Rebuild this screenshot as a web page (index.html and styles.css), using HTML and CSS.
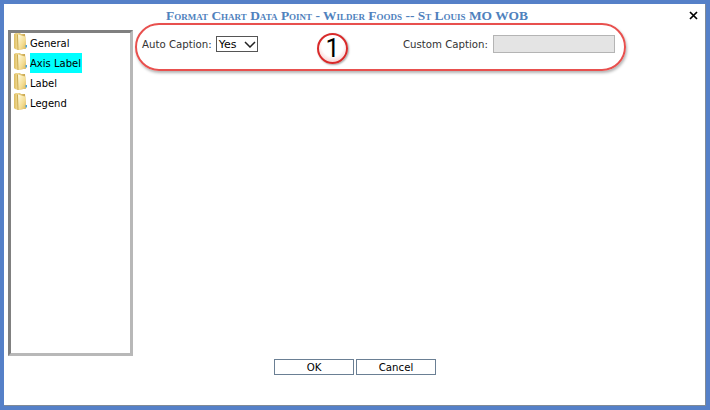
FILE: index.html
```html
<!DOCTYPE html>
<html>
<head>
  <title>Format Chart Data Point</title>
  <meta charset=utf-8>
  <link rel="stylesheet" href="styles.css">
</head>
<body>
<svg class="defs" width="0" height="0">
  <defs>
    <linearGradient id="folderBack" x1="0" y1="0" x2="1" y2="0">
      <stop offset="0" stop-color="#dcbc62"/>
      <stop offset="0.3" stop-color="#f3dc94"/>
      <stop offset="1" stop-color="#c49f45"/>
    </linearGradient>
    <linearGradient id="folderFront" x1="0" y1="0" x2="1" y2="1">
      <stop offset="0" stop-color="#fffbe0"/>
      <stop offset="0.6" stop-color="#f4dd92"/>
      <stop offset="1" stop-color="#d8b65a"/>
    </linearGradient>
    <symbol id="folder" viewBox="0 0 13 17">
      <path d="M0 1 L2 0 L6 0 L7 1 L11 1 L12 15.5 L4 17 L1 16 L0 15 Z" fill="url(#folderBack)"/>
      <path d="M4 1.5 L9 3 L11.5 3.5 L12 15.5 L4 17 Z" fill="url(#folderFront)"/>
      <path d="M3.5 1.5 L4 17" stroke="#c8a850" stroke-width="1" fill="none"/>
      <rect x="11.5" y="12" width="1.5" height="2.5" fill="#4aa3d8"/>
    </symbol>
  </defs>
</svg>
<div class="dialog">
  <div class="dialogTitle">Format Chart Data Point - Wilder Foods -- St Louis MO WOB</div>
  <button class="close" type="button">
    <svg width="9" height="9" viewBox="0 0 9 9"><path d="M1 1 L8 8 M8 1 L1 8" stroke="#000" stroke-width="1.7"/></svg>
  </button>
  <div class="main">
    <ul class="tree">
      <li><svg class="folder"><use href="#folder"/></svg><span>General</span></li>
      <li><svg class="folder"><use href="#folder"/></svg><span class="selected">Axis Label</span></li>
      <li><svg class="folder"><use href="#folder"/></svg><span>Label</span></li>
      <li><svg class="folder"><use href="#folder"/></svg><span>Legend</span></li>
    </ul>
    <div class="content">
      <div class="fields">
        <label class="field">Auto Caption:
          <span class="select">Yes
            <svg width="12" height="7" viewBox="0 0 12 7"><path d="M1 1 L6 6 L11 1" stroke="#222" stroke-width="1.5" fill="none"/></svg>
          </span>
        </label>
        <label class="field">Custom Caption:
          <span class="textbox"></span>
        </label>
      </div>
    </div>
  </div>
  <div class="buttons">
    <button class="btn" type="button">OK</button>
    <button class="btn" type="button">Cancel</button>
  </div>
  <!-- annotation drawn over the dialog -->
  <div class="callout"></div>
  <div class="badge">1</div>
</div>
</body>
</html>
```

FILE: styles.css
```css
html {
  padding: 0;
  margin: 0;
}
body {
  width: 710px;
  height: 410px;
  margin: 0;
  overflow: hidden;
  background-color: #fff;
}
.defs {
  position: absolute;
}
.dialog {
  position: relative;
  box-sizing: border-box;
  display: flex;
  flex-direction: column;
  width: 710px;
  height: 410px;
  border: 4px solid #5580c8;
  box-shadow: inset -1px -1px 0 #808a96;
  background-color: #fff;
  font-family: "DejaVu Sans", sans-serif;
  font-size: 10.2px;
  color: #000;
}
.dialogTitle {
  height: 26px;
  padding: 4px 16px 0 0;
  box-sizing: border-box;
  text-align: center;
  font-family: "Liberation Serif", serif;
  font-size: 13.45px;
  line-height: 15px;
  font-weight: bold;
  font-variant: small-caps;
  color: #4f81bd;
}
.close {
  position: absolute;
  top: 7px;
  right: 8px;
  width: 9px;
  height: 9px;
  padding: 0;
  border: 0;
  background: none;
  display: flex;
}
.main {
  display: flex;
  height: 326px;
  padding-left: 4px;
}
.tree {
  box-sizing: border-box;
  width: 125px;
  height: 326px;
  margin: 0;
  padding: 0 0 0 3px;
  list-style: none;
  border: 3px solid;
  border-color: #808080 #b8b8b8 #b8b8b8 #808080;
}
.tree > li {
  display: flex;
  align-items: flex-start;
  height: 20px;
  font-size: 10px;
}
.folder {
  width: 13px;
  height: 17px;
  margin-right: 3px;
}
.tree span {
  height: 20px;
  padding: 0 1px 0 0;
  line-height: 22px;
}
.tree .selected {
  background-color: #00ffff;
}
.content {
  flex: 1;
  padding: 5px 0 0 9px;
}
.fields {
  display: flex;
  justify-content: space-between;
  width: 473px;
}
.field {
  display: flex;
  align-items: center;
  gap: 5px;
  color: #333;
}
.select {
  box-sizing: border-box;
  display: flex;
  align-items: center;
  justify-content: space-between;
  width: 42px;
  height: 16px;
  margin-left: -1px;
  padding: 0 1px 0 2px;
  border: 1px solid #555;
  color: #000;
  font-size: 11px;
}
.textbox {
  box-sizing: border-box;
  width: 122px;
  height: 18px;
  border: 1px solid #b4b4b4;
  background-color: #e4e4e4;
}
.buttons {
  display: flex;
  justify-content: center;
  gap: 2px;
  margin-top: 3px;
}
.btn {
  width: 80px;
  height: 16px;
  padding: 1px 0 0 0;
  border: 1px solid #6a7f94;
  background-color: #fff;
  font-family: "DejaVu Sans", sans-serif;
  font-size: 10.2px;
  line-height: 14px;
  color: #000;
}
.callout {
  position: absolute;
  left: 131px;
  top: 19px;
  width: 487px;
  height: 44px;
  border: 2px solid #e8504e;
  border-radius: 24px;
  box-shadow: 1px 2px 3px rgba(0, 0, 0, 0.3);
}
.badge {
  position: absolute;
  left: 313px;
  top: 29px;
  box-sizing: border-box;
  width: 31px;
  height: 31px;
  border: 2px solid #d82a2a;
  border-radius: 50%;
  background: radial-gradient(circle at 50% 40%, #fff 50%, #f4b0b0 100%);
  box-shadow: 1px 1px 2px rgba(0, 0, 0, 0.35);
  font-family: Roboto, sans-serif;
  font-size: 25px;
  line-height: 28px;
  text-align: center;
  color: #000;
}
```
